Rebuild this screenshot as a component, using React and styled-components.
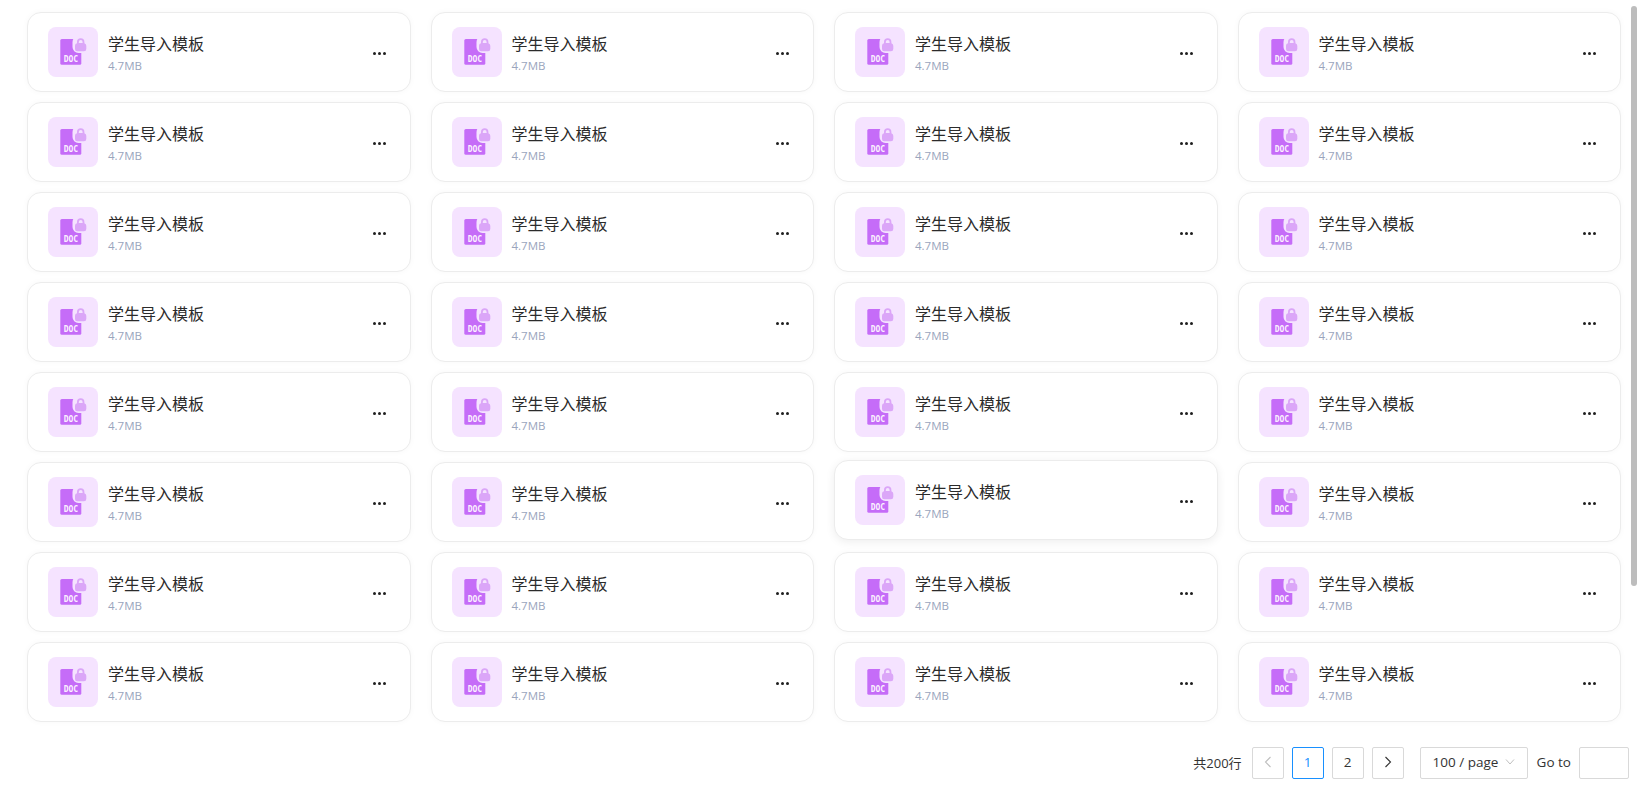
import React from "react";
import styled, { createGlobalStyle } from "styled-components";

const GlobalStyle = createGlobalStyle`
  html, body {
    margin: 0;
    height: 100%;
    overflow: hidden;
    background: #fff;
    font-family: "Open Sans", "Noto Sans CJK SC", sans-serif;
  }
`;

const Page = styled.div`
  position: relative;
  height: 785px;
  padding: 12px 29px 0 27px;
  box-sizing: border-box;
  background: #fff;
`;

const Grid = styled.div`
  display: grid;
  grid-template-columns: repeat(4, 1fr);
  column-gap: 20px;
  row-gap: 10px;
`;

const Card = styled.div`
  display: flex;
  align-items: center;
  height: 80px;
  padding: 0 20px;
  box-sizing: border-box;
  background: #fff;
  border: 1px solid #ececec;
  border-radius: 14px;
  box-shadow: 0 0 6px rgba(0, 0, 0, 0.03);
  ${(p) =>
    p.$hovered &&
    `
    transform: translateY(-2px);
    box-shadow: 0 2px 10px rgba(0, 0, 0, 0.07);
  `}
`;

const IconBox = styled.div`
  display: flex;
  align-items: center;
  justify-content: center;
  flex: none;
  width: 50px;
  height: 50px;
  border-radius: 8px;
  background: #f5e3ff;
`;

const Info = styled.div`
  flex: 1;
  margin-left: 10px;
  padding-top: 1px;
  min-width: 0;
`;

const Name = styled.div`
  font-family: "Noto Sans CJK SC", sans-serif;
  font-size: 16px;
  line-height: 22px;
  color: #2b2b2b;
`;

const Size = styled.div`
  margin-top: 4px;
  font-size: 11.5px;
  line-height: 16px;
  color: #9aa5bd;
`;

const More = styled.div`
  display: flex;
  gap: 2px;
  flex: none;
  margin-right: 4px;
  margin-top: 2px;
`;

const Dot = styled.span`
  width: 3px;
  height: 3px;
  border-radius: 50%;
  background: #1f1f1f;
`;

const Pager = styled.div`
  display: flex;
  align-items: center;
  justify-content: flex-end;
  height: 32px;
  margin-top: 25px;
  margin-right: -8px;
  font-size: 13.5px;
  color: #333;
`;

const Total = styled.span`
  margin-right: 10px;
  margin-bottom: 2px;
  font-size: 13px;
`;

const PageBtn = styled.div`
  display: flex;
  align-items: center;
  justify-content: center;
  width: 32px;
  height: 32px;
  margin-right: 8px;
  padding-bottom: 2px;
  box-sizing: border-box;
  background: #fff;
  border: 1px solid ${(p) => (p.$active ? "#1890ff" : "#d9d9d9")};
  border-radius: 2px;
  color: ${(p) => (p.$active ? "#1890ff" : p.$disabled ? "#bfbfbf" : "#333")};
`;

const Select = styled.div`
  display: flex;
  align-items: center;
  justify-content: space-between;
  width: 108px;
  height: 32px;
  margin-left: 8px;
  padding: 0 12px 2px;
  box-sizing: border-box;
  border: 1px solid #d9d9d9;
  border-radius: 2px;
  white-space: nowrap;
`;

const GoTo = styled.span`
  margin: 0 8px 2px 9px;
`;

const JumpInput = styled.div`
  width: 50px;
  height: 32px;
  box-sizing: border-box;
  border: 1px solid #d9d9d9;
  border-radius: 2px;
`;

const ScrollThumb = styled.div`
  position: absolute;
  top: 6px;
  right: 13px;
  width: 6px;
  height: 580px;
  border-radius: 3px;
  background: #bdbdbd;
`;

const DocIcon = () => (
  <svg width="28" height="28" viewBox="0 0 28 28">
    <rect x="1.300" y="1" width="21" height="25.700" rx="1.500" fill="#c56cf8" />
    <rect x="13.500" y="-2" width="16" height="17" rx="6" fill="#f5e3ff" />
    <path
      d="M18 5.200V4a3.700 3.700 0 0 1 7.400 0v1.200a2.600 2.600 0 0 1 1.900 2.500v3.300a2.300 2.300 0 0 1-2.300 2.300h-6.700a2.300 2.300 0 0 1-2.300-2.300V7.700A2.600 2.600 0 0 1 18 5.200Z"
      fill="#dba6f8"
    />
    <path d="M19.800 5V4a1.900 1.900 0 0 1 3.800 0v1Z" fill="#f5e3ff" />
    <text
      x="11.900"
      y="23.500"
      textAnchor="middle"
      fontFamily="'DejaVu Sans Mono', monospace"
      fontWeight="700"
      fontSize="8"
      fill="#fbf1ff"
    >
      DOC
    </text>
  </svg>
);

const Chevron = ({ dir, color }) => (
  <svg width="12" height="12" viewBox="0 0 12 12" fill="none" stroke={color} strokeWidth="1.100">
    <path d={dir === "left" ? "M8.500 1 3.500 6 8.500 11" : "M3.500 1 8.500 6 3.500 11"} />
  </svg>
);

const FileCard = ({ hovered }) => (
  <Card $hovered={hovered}>
    <IconBox>
      <DocIcon />
    </IconBox>
    <Info>
      <Name>学生导入模板</Name>
      <Size>4.7MB</Size>
    </Info>
    <More>
      <Dot />
      <Dot />
      <Dot />
    </More>
  </Card>
);

const App = () => {
  const cards = Array.from({ length: 32 }, (_, i) => i);
  return (
    <Page>
      <GlobalStyle />
      <Grid>
        {cards.map((i) => (
          <FileCard key={i} hovered={i === 22} />
        ))}
      </Grid>
      <Pager>
        <Total>共200行</Total>
        <PageBtn $disabled>
          <Chevron dir="left" color="#bfbfbf" />
        </PageBtn>
        <PageBtn $active>1</PageBtn>
        <PageBtn>2</PageBtn>
        <PageBtn>
          <Chevron dir="right" color="#333" />
        </PageBtn>
        <Select>
          100 / page
          <svg width="10" height="10" viewBox="0 0 10 10" fill="none" stroke="#bfbfbf" strokeWidth="1">
            <path d="M1 2.500 5 7 9 2.500" />
          </svg>
        </Select>
        <GoTo>Go to</GoTo>
        <JumpInput />
      </Pager>
      <ScrollThumb />
    </Page>
  );
};

export default App;
